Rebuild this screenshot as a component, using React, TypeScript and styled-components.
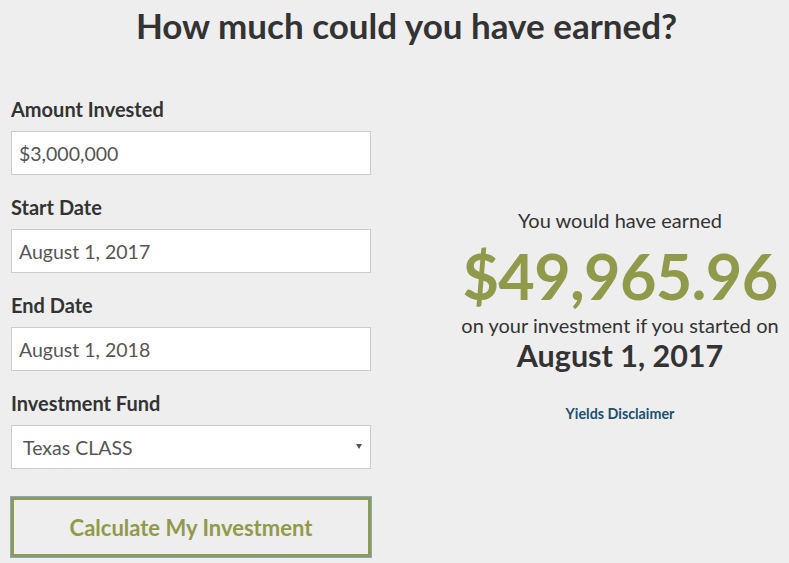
import React from "react";
import styled, { createGlobalStyle } from "styled-components";

const Global = createGlobalStyle`
  html, body { margin: 0; padding: 0; background: #eeeeee; }
  body { font-family: Lato, "Open Sans", sans-serif; color: #333333; }
  * { box-sizing: border-box; }
`;

const Page = styled.div`
  width: 789px;
  height: 563px;
  overflow: hidden;
  background: #eeeeee;
`;

const Title = styled.h1`
  margin: 0;
  padding: 3px 0 0 24px;
  text-align: center;
  font-size: 35px;
  font-weight: 700;
  line-height: 44px;
  color: #333333;
`;

const Columns = styled.div`
  display: grid;
  grid-template-columns: 360px 338px;
  column-gap: 80px;
  padding: 50px 0 0 11px;
`;

const Form = styled.form`
  display: flex;
  flex-direction: column;
`;

const Field = styled.div`
  display: flex;
  flex-direction: column;
  margin-bottom: 20px;
`;

const Label = styled.label`
  font-size: 20px;
  font-weight: 700;
  line-height: 24px;
  margin-bottom: 10px;
  color: #333333;
`;

const Input = styled.input`
  width: 360px;
  height: 44px;
  border: 1px solid #cccccc;
  background: #ffffff;
  padding: 0 7px;
  font-family: Lato, sans-serif;
  font-size: 19.5px;
  color: #555555;
  outline: none;
`;

const SelectWrap = styled.div`
  position: relative;
  width: 360px;
`;

const Select = styled.select`
  appearance: none;
  width: 360px;
  height: 44px;
  border: 1px solid #cccccc;
  background: #ffffff;
  padding: 0 11px;
  font-family: Lato, sans-serif;
  font-size: 19.5px;
  color: #555555;
  outline: none;
`;

const Caret = styled.span`
  position: absolute;
  right: 9px;
  top: 19px;
  width: 0;
  height: 0;
  border-left: 3px solid transparent;
  border-right: 3px solid transparent;
  border-top: 5px solid #555555;
  pointer-events: none;
`;

const Button = styled.button`
  margin-top: 8px;
  width: 360px;
  height: 60px;
  background: transparent;
  border: 3px solid #919a4b;
  outline: 1px solid #7ba7e6;
  font-family: Lato, sans-serif;
  font-size: 22px;
  font-weight: 700;
  color: #919a4b;
  cursor: pointer;
`;

const Result = styled.div`
  display: flex;
  flex-direction: column;
  align-items: center;
  padding-top: 111px;
  text-align: center;
`;

const Lead = styled.div`
  font-size: 20px;
  line-height: 24px;
  color: #333333;
`;

const Amount = styled.div`
  font-size: 63px;
  font-weight: 700;
  line-height: 70px;
  letter-spacing: -0.7px;
  color: #919a4b;
  margin: 9px 0 2px;
`;

const DateBig = styled.div`
  font-size: 30.5px;
  font-weight: 700;
  line-height: 36px;
  color: #333333;
`;

const Disclaimer = styled.a`
  margin-top: 32px;
  font-size: 14.3px;
  font-weight: 700;
  color: #1d4f6e;
  text-decoration: none;
`;

export default function App() {
  return (
    <Page>
      <Global />
      <Title>How much could you have earned?</Title>
      <Columns>
        <Form onSubmit={(e) => e.preventDefault()}>
          <Field>
            <Label>Amount Invested</Label>
            <Input defaultValue="$3,000,000" />
          </Field>
          <Field>
            <Label>Start Date</Label>
            <Input defaultValue="August 1, 2017" />
          </Field>
          <Field>
            <Label>End Date</Label>
            <Input defaultValue="August 1, 2018" />
          </Field>
          <Field>
            <Label>Investment Fund</Label>
            <SelectWrap>
              <Select defaultValue="Texas CLASS">
                <option>Texas CLASS</option>
              </Select>
              <Caret />
            </SelectWrap>
          </Field>
          <Button type="submit">Calculate My Investment</Button>
        </Form>
        <Result>
          <Lead>You would have earned</Lead>
          <Amount>$49,965.96</Amount>
          <Lead>on your investment if you started on</Lead>
          <DateBig>August 1, 2017</DateBig>
          <Disclaimer href="#">Yields Disclaimer</Disclaimer>
        </Result>
      </Columns>
    </Page>
  );
}
